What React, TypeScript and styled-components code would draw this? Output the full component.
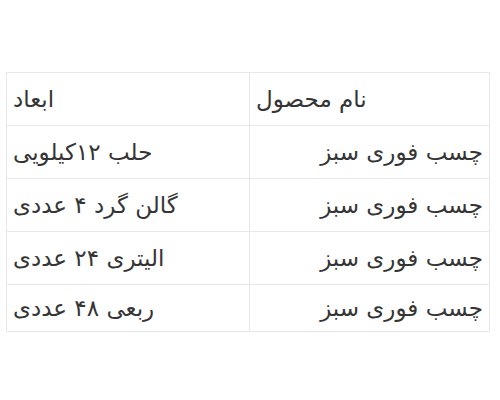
import styled, { createGlobalStyle } from "styled-components";

const GlobalStyle = createGlobalStyle`
  html, body {
    margin: 0;
    padding: 0;
    background: #fff;
  }
`;

const Page = styled.div`
  width: 500px;
  height: 400px;
  box-sizing: border-box;
  padding: 72px 10px 0 7px;
  direction: rtl;
  font-family: "DejaVu Sans", "Noto Sans", sans-serif;
  color: #353535;
`;

const Table = styled.table`
  width: 483px;
  border-collapse: collapse;
  table-layout: fixed;
`;

const Cell = styled.td<{ $align: "left" | "right"; $last?: boolean }>`
  height: ${(p) => (p.$last ? "46px" : "52px")};
  padding: 0 6px;
  border: 1px solid #e8e8e8;
  text-align: ${(p) => p.$align};
  font-size: 23px;
  font-weight: normal;
  white-space: nowrap;
  vertical-align: middle;
`;

const rows = [
  "حلب ۱۲کیلویی",
  "گالن گرد ۴ عددی",
  "الیتری ۲۴ عددی",
  "ربعی ۴۸ عددی",
];

export default function App() {
  return (
    <Page>
      <GlobalStyle />
      <Table>
        <colgroup>
          <col style={{ width: 240 }} />
          <col style={{ width: 243 }} />
        </colgroup>
        <tbody>
          <tr>
            <Cell as="th" $align="left">نام محصول</Cell>
            <Cell as="th" $align="left">ابعاد</Cell>
          </tr>
          {rows.map((size, i) => (
            <tr key={size}>
              <Cell $align="right" $last={i === rows.length - 1}>
                چسب فوری سبز
              </Cell>
              <Cell $align="left" $last={i === rows.length - 1}>
                {size}
              </Cell>
            </tr>
          ))}
        </tbody>
      </Table>
    </Page>
  );
}
